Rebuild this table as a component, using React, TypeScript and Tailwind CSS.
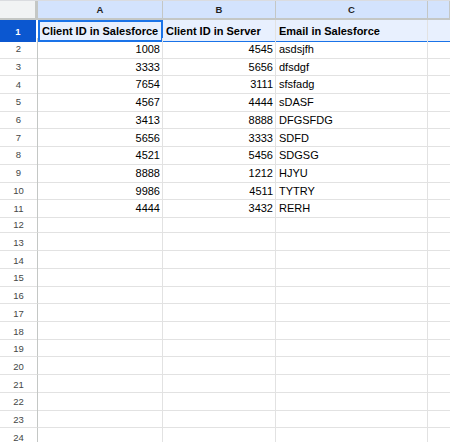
import React from 'react';

const rows: [string, string, string][] = [
  ['1008', '4545', 'asdsjfh'],
  ['3333', '5656', 'dfsdgf'],
  ['7654', '3111', 'sfsfadg'],
  ['4567', '4444', 'sDASF'],
  ['3413', '8888', 'DFGSFDG'],
  ['5656', '3333', 'SDFD'],
  ['4521', '5456', 'SDGSG'],
  ['8888', '1212', 'HJYU'],
  ['9986', '4511', 'TYTRY'],
  ['4444', '3432', 'RERH'],
];

const cols = 'grid grid-cols-[38px_125px_113px_152px_1fr]';

const App: React.FC = () => {
  const empty = Array.from({ length: 13 }, (_, i) => i + 12);

  return (
    <div
      className="h-[442px] w-[450px] overflow-hidden bg-white text-[11px] text-black"
      style={{ fontFamily: '"Liberation Sans", Arial, sans-serif' }}
    >
      {/* column headers */}
      <div className={`${cols} h-[20px] border-t border-[#dadce0] border-b-2 border-b-[#c4c7c5]`}>
        <div className="border-r-[3px] border-[#c4c7c5] bg-[#f1f3f4]" />
        {['A', 'B', 'C', ''].map((l, i) => (
          <div
            key={i}
            className="flex items-center justify-center border-r border-[#c4c7c5] bg-[#d3e3fd] pt-[1px] text-[9.5px] font-bold text-[#1f1f1f]"
          >
            {l}
          </div>
        ))}
      </div>

      {/* row 1 - selected */}
      <div className={`${cols} h-[18px]`}>
        <div className="flex items-center justify-center border-r-[2px] border-white bg-[#0b57d0] pt-[2px] text-[9.5px] font-bold text-white">
          1
        </div>
        <div className="flex items-center border-2 border-[#1a73e8] bg-[#e8f0fe] pl-[2px] pt-[1px] font-bold">
          Client ID in Salesforce
        </div>
        <div className="flex items-center border-r border-b border-[#e2e2e2] border-b-[#1a73e8] bg-[#e8f0fe] pl-[3px] pt-[2px] font-bold">
          Client ID in Server
        </div>
        <div className="flex items-center border-r border-b border-[#e2e2e2] border-b-[#1a73e8] bg-[#e8f0fe] pl-[3px] pt-[2px] font-bold">
          Email in Salesforce
        </div>
        <div className="border-b border-[#1a73e8] bg-[#e8f0fe]" />
      </div>

      {/* data rows */}
      {rows.map((r, i) => (
        <div key={i} className={`${cols} h-[17.72px]`}>
          <div className="flex items-center justify-center border-r border-b border-[#c4c7c5] border-b-[#e2e2e2] pt-[3px] text-[9.5px] text-[#444746]">
            {i + 2}
          </div>
          <div className="flex items-center justify-end border-r border-b border-[#e2e2e2] pr-[2px] pt-[3px]">
            {r[0]}
          </div>
          <div className="flex items-center justify-end border-r border-b border-[#e2e2e2] pr-[2px] pt-[3px]">
            {r[1]}
          </div>
          <div className="flex items-center border-r border-b border-[#e2e2e2] pl-[3px] pt-[3px]">
            {r[2]}
          </div>
          <div className="border-b border-[#e2e2e2]" />
        </div>
      ))}

      {empty.map((n) => (
        <div key={n} className={`${cols} h-[17.72px]`}>
          <div className="flex items-center justify-center border-r border-b border-[#c4c7c5] border-b-[#e2e2e2] pt-[3px] text-[9.5px] text-[#444746]">
            {n}
          </div>
          <div className="border-r border-b border-[#e2e2e2]" />
          <div className="border-r border-b border-[#e2e2e2]" />
          <div className="border-r border-b border-[#e2e2e2]" />
          <div className="border-b border-[#e2e2e2]" />
        </div>
      ))}
    </div>
  );
};

export default App;
